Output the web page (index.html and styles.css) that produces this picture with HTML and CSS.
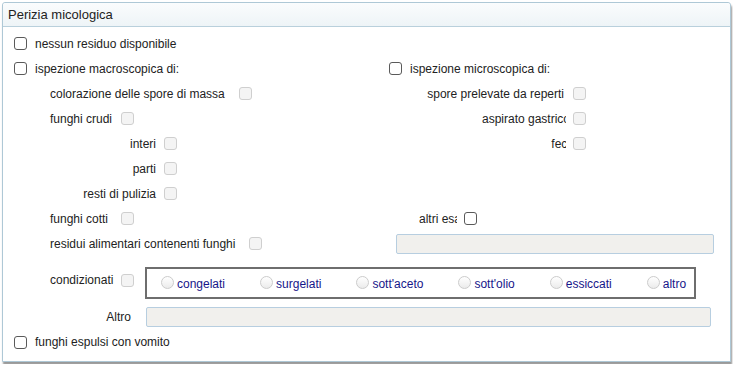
FILE: index.html
```html
<!DOCTYPE html>
<html>
<head>
    <title>Perizia micologica</title>
    <meta name="viewport" content="width=device-width, initial-scale=1.0">
    <link rel="stylesheet" href="styles.css">
</head>
<body>
    <div class="panel">
        <div class="panel-header">Perizia micologica</div>
        <div class="panel-body">
            <div class="row">
                <label class="check"><input type="checkbox" class="cb"> nessun residuo disponibile</label>
            </div>
            <div class="row">
                <label class="check"><input type="checkbox" class="cb"> ispezione macroscopica di:</label>
                <label class="check"><input type="checkbox" class="cb"> ispezione microscopica di:</label>
            </div>
            <div class="row">
                <div class="sub">
                    <span class="lbl long">colorazione delle spore di massa</span>
                    <input type="checkbox" class="cb" disabled>
                </div>
                <div class="rsub">
                    <span class="rlbl full"><span>spore prelevate da reperti</span></span>
                    <input type="checkbox" class="cb" disabled>
                </div>
            </div>
            <div class="row">
                <div class="sub">
                    <span class="lbl">funghi crudi</span>
                    <input type="checkbox" class="cb" disabled>
                </div>
                <div class="rsub">
                    <span class="rlbl"><span>aspirato gastrico</span></span>
                    <input type="checkbox" class="cb" disabled>
                </div>
            </div>
            <div class="row">
                <div class="sub">
                    <span class="lbl right">interi</span>
                    <input type="checkbox" class="cb" disabled>
                </div>
                <div class="rsub">
                    <span class="rlbl"><span>feci</span></span>
                    <input type="checkbox" class="cb" disabled>
                </div>
            </div>
            <div class="row">
                <div class="sub">
                    <span class="lbl right">parti</span>
                    <input type="checkbox" class="cb" disabled>
                </div>
            </div>
            <div class="row">
                <div class="sub">
                    <span class="lbl right">resti di pulizia</span>
                    <input type="checkbox" class="cb" disabled>
                </div>
            </div>
            <div class="row">
                <div class="sub">
                    <span class="lbl">funghi cotti</span>
                    <input type="checkbox" class="cb" disabled>
                </div>
                <div class="other">
                    <span class="other-lbl">altri esami</span>
                    <input type="checkbox" class="cb">
                </div>
            </div>
            <div class="row">
                <div class="sub">
                    <span class="lbl long">residui alimentari contenenti funghi</span>
                    <input type="checkbox" class="cb" disabled>
                </div>
                <input type="text" class="field field-right" disabled>
            </div>

            <div class="cond-row">
                <span class="lbl cond-lbl">condizionati</span>
                <input type="checkbox" class="cb cond-cb" disabled>
                <div class="group">
                    <label class="radio"><input type="radio" name="cond" class="rb" disabled>congelati</label>
                    <label class="radio"><input type="radio" name="cond" class="rb" disabled>surgelati</label>
                    <label class="radio"><input type="radio" name="cond" class="rb" disabled>sott'aceto</label>
                    <label class="radio"><input type="radio" name="cond" class="rb" disabled>sott'olio</label>
                    <label class="radio"><input type="radio" name="cond" class="rb" disabled>essiccati</label>
                    <label class="radio"><input type="radio" name="cond" class="rb" disabled>altro</label>
                </div>
            </div>

            <div class="altro-row">
                <span class="altro-lbl">Altro</span>
                <input type="text" class="field field-altro" disabled>
            </div>

            <div class="row last">
                <label class="check"><input type="checkbox" class="cb"> funghi espulsi con vomito</label>
            </div>
        </div>
    </div>
</body>
</html>
```

FILE: styles.css
```css
body {
    margin: 0;
    font-family: "Liberation Sans", Arial, sans-serif;
    font-size: 12px;
    color: #222222;
    background-color: #ffffff;
}
.panel {
    margin: 2px;
    width: 727px;
    height: 358px;
    border: 1px solid #aec8d6;
    border-radius: 3px 3px 0 0;
    box-shadow: 1px 3px 2px rgba(0, 0, 0, 0.4);
    background-color: #ffffff;
}
.panel-header {
    height: 23px;
    line-height: 23px;
    padding-left: 5px;
    font-size: 13px;
    color: #222222;
    background: linear-gradient(#fafcfd, #eef4f7);
    border-bottom: 1px solid #b9d0dc;
    border-radius: 3px 3px 0 0;
}
.panel-body {
    padding: 4px 0 0 11px;
}
.row {
    display: grid;
    grid-template-columns: 375px 341px;
    height: 25px;
    align-items: center;
}
.row.last {
    height: 30px;
}
.check {
    display: flex;
    align-items: center;
    white-space: nowrap;
}
.check .cb {
    margin-right: 8px;
}
.cb {
    appearance: none;
    -webkit-appearance: none;
    width: 13px;
    height: 13px;
    margin: 0;
    border: 1px solid #5a5a5a;
    border-radius: 3px;
    background-color: #ffffff;
    box-sizing: border-box;
    flex: none;
}
.cb:disabled {
    border-color: #cfcfcf;
    background-color: #f4f4f4;
}
.sub {
    display: flex;
    align-items: center;
    padding-left: 36px;
}
.lbl {
    width: 71px;
    flex: none;
    white-space: nowrap;
}
.lbl.long {
    width: auto;
    padding-right: 14px;
}
.lbl.right {
    width: 106px;
    text-align: right;
    padding-right: 8px;
}
.rsub {
    display: flex;
    align-items: center;
    justify-content: flex-end;
    width: 197px;
}
.rlbl {
    overflow: hidden;
    white-space: nowrap;
    text-align: right;
    margin-right: 7px;
}
.rlbl span {
    margin-right: -4px;
}
.rlbl.full span {
    margin-right: 0;
}
.rlbl.full {
    margin-right: 9px;
}
.other {
    display: flex;
    align-items: center;
    padding-left: 30px;
}
.other-lbl {
    width: 38px;
    overflow: hidden;
    white-space: nowrap;
    margin-right: 7px;
}
.field {
    height: 20px;
    border: 1px solid #b7cee0;
    border-radius: 2px;
    background-color: #f1f0ed;
    box-sizing: border-box;
    margin: 0;
}
.field-right {
    width: 318px;
    margin-left: 7px;
}
.cond-row {
    display: flex;
    align-items: flex-start;
    margin-top: 11px;
    padding-left: 36px;
}
.cond-lbl {
    margin-top: 6px;
}
.cond-cb {
    margin-top: 7px;
}
.group {
    display: flex;
    align-items: center;
    gap: 35px;
    width: 551px;
    height: 32px;
    margin-left: 11px;
    padding-left: 14px;
    border: 2px solid #6e6e6e;
    box-sizing: border-box;
}
.radio {
    display: flex;
    align-items: center;
    color: #16168a;
    white-space: nowrap;
    padding-top: 2px;
}
.rb {
    appearance: none;
    -webkit-appearance: none;
    width: 13px;
    height: 13px;
    margin: -3px 3px 0 0;
    border: 1px solid #cccccc;
    border-radius: 50%;
    background: linear-gradient(#ffffff, #ebebeb);
    box-sizing: border-box;
}
.altro-row {
    display: flex;
    align-items: center;
    margin-top: 8px;
}
.altro-lbl {
    width: 117px;
    text-align: right;
    margin-right: 15px;
}
.field-altro {
    width: 565px;
}
```
